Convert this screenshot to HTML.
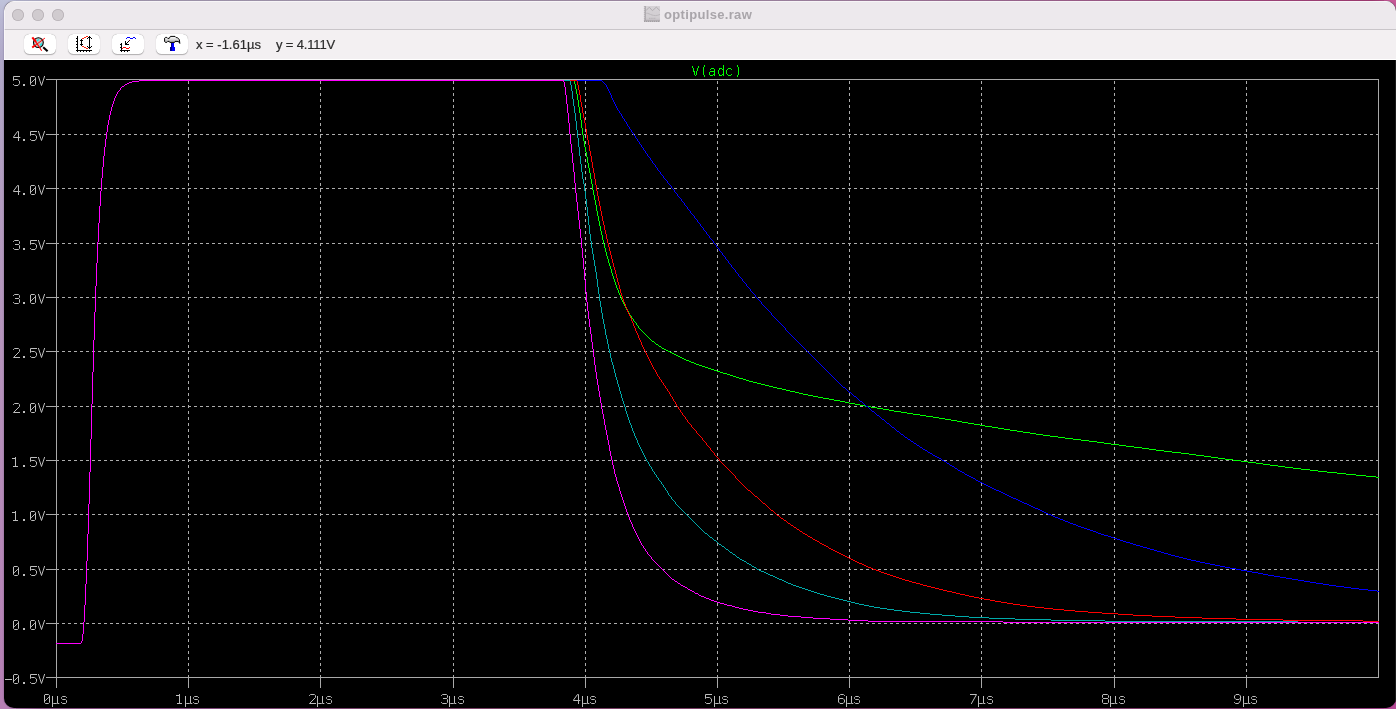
<!DOCTYPE html>
<html><head><meta charset="utf-8"><title>optipulse.raw</title>
<style>
html,body{margin:0;padding:0}
body{width:1396px;height:709px;overflow:hidden;position:relative;background:#b58fb8;font-family:"Liberation Sans",sans-serif}
#bgl{position:absolute;left:0;top:0;width:16px;height:709px;background:linear-gradient(to bottom,#c0c3db 0,#b8b6d2 20px,#b0a8c8 60px,#b39cc0 200px,#b594bc 345px,#b588b8 540px,#b67fb4 709px)}
#bgt{position:absolute;left:0;top:0;width:1396px;height:14px;background:linear-gradient(to right,#bfc3db 0,#a9a0b6 120px,#a89cb0 420px,#a68aa6 800px,#a46e96 1000px,#a84a80 1250px,#a83c74 1372px,#c85a98 1396px)}
#bgb{position:absolute;left:0;top:694px;width:1396px;height:15px;background:linear-gradient(to right,#b880b6 0,#a873a6 12px,#8c5286 40px,#8a4f84 200px,#82466a 450px,#84406c 1000px,#8a3870 1300px,#a8448c 1380px,#b84c98 1396px)}
#bgr{position:absolute;left:1384px;top:0;width:12px;height:709px;background:linear-gradient(to bottom,#c85a98 0,#b84c90 20px,#b04888 400px,#b64a96 709px)}
#win{position:absolute;left:4px;top:1px;width:1392px;height:706.6px;border-radius:10px;overflow:hidden;background:#000;box-shadow:0 0 1.5px rgba(40,20,60,.55)}
#tb{position:absolute;left:0;top:0;width:100%;height:28px;background:#ede9ed;border-top:1px solid #f7f5f7;box-sizing:border-box}
#sep{position:absolute;left:0;top:28px;width:100%;height:1px;background:#c9c5c9}
#tools{position:absolute;left:0;top:29px;width:100%;height:30px;background:#f3f0f2;border-bottom:1px solid #fff;box-sizing:border-box}
#edge{position:absolute;right:0;top:59px;width:1px;height:660px;background:#1a1a1a}
#edgl{position:absolute;left:0;top:0;width:1px;height:59px;background:rgba(255,255,255,.55)}
.tl{position:absolute;top:8px;width:12px;height:12px;border-radius:50%;background:#d0cbcf;box-shadow:inset 0 0 0 .8px #b7b1b6;box-sizing:border-box}
#ttl{will-change:transform;position:absolute;left:660.2px;top:6.1px;font-weight:bold;font-size:13px;line-height:16px;color:#a9a5aa;white-space:nowrap;letter-spacing:.33px}
.btn{position:absolute;top:33px;width:32px;height:19.7px;border-radius:5.5px;background:#fff;box-shadow:0 .5px 1px rgba(0,0,0,.28),0 0 .5px rgba(0,0,0,.25)}
.rd{will-change:transform;position:absolute;top:36px;font-size:13px;line-height:16px;color:#2b2b2b;-webkit-text-stroke:.2px #2b2b2b;white-space:nowrap}
#plot{position:absolute;left:0;top:0}
#ico{position:absolute;left:0;top:0}
</style></head>
<body>
<div id="bgt"></div><div id="bgb"></div><div id="bgl"></div><div id="bgr"></div>
<div id="win">
<div id="tb"></div><div id="sep"></div><div id="tools"></div><div id="edge"></div><div id="edgl"></div>
<div class="tl" style="left:8px"></div><div class="tl" style="left:28px"></div><div class="tl" style="left:48px"></div>
<div id="ttl">optipulse.raw</div>
<div class="btn" style="left:20px"></div><div class="btn" style="left:64px"></div><div class="btn" style="left:108px"></div><div class="btn" style="left:152px"></div>
<div class="rd" id="rx" style="left:192.4px">x = -1.61µs</div>
<div class="rd" id="ry" style="left:272.2px;letter-spacing:-.15px">y = 4.111V</div>
</div>
<svg id="ico" width="1396" height="64" viewBox="0 0 1396 64"><g><defs><linearGradient id="tig" x1="0" y1="0" x2="0" y2="1"><stop offset="0" stop-color="#d6d2d6"/><stop offset=".7" stop-color="#d2ced2"/><stop offset="1" stop-color="#c2bec2"/></linearGradient></defs><rect x="644" y="6" width="16" height="16" fill="url(#tig)"/><path d="M645.4 6V21" fill="none" stroke="#aeaaae" stroke-width="1.1"/><path d="M644.4 6V21" fill="none" stroke="#b0acb0" stroke-width=".9" stroke-dasharray="1.2 .8"/><path d="M644 20.4H660" fill="none" stroke="#b0acb0" stroke-width=".9"/><path d="M644 21.3H660" fill="none" stroke="#a29ea2" stroke-width="1.2" stroke-dasharray="1.2 .8"/><path d="M646 10.6L649.3 7.2L652.4 10.7L656.3 7.2L659.9 10.6" fill="none" stroke="#b2aeb2" stroke-width="1"/><path d="M646.3 13.3C648 13 650 14.4 652 15C654 15.7 657 16 660 14.4" fill="none" stroke="#bdb9bd" stroke-width="1"/><path d="M649 18.3H656" fill="none" stroke="#b6b2b6" stroke-width="1" stroke-dasharray="1.5 .7"/></g><g><circle cx="38.4" cy="42.6" r="4.9" fill="#c3c3c3" stroke="#000" stroke-width="1.1"/><path d="M36.4 40.4L38.6 39L39.2 40L37 41.5Z M39.6 45L41.6 43L42.3 44.2L40.3 46.1Z" fill="#00f0f0"/><path d="M43.2 47.3L47.6 51.2" stroke="#000" stroke-width="2.1" stroke-linecap="butt"/><path d="M35 40.6L41.7 50.7" stroke="#ff0000" stroke-width="1.05" fill="none"/><path d="M32.3 37.3L36 41.8" stroke="#ff0000" stroke-width="2.1" fill="none"/><path d="M34.4 46L44.9 38.1" stroke="#ff0000" stroke-width="1.0" fill="none"/><path d="M32.2 47.6L35.6 45.1" stroke="#ff0000" stroke-width="1.9" fill="none"/></g><g><path fill="#000" d="M77 36h1v15h-1zM76 50h16v1h-16zM76 38h1v1h-1zM76 41h1v1h-1zM76 44h1v1h-1zM76 47h1v1h-1zM77 51h1v1h-1zM80 51h1v1h-1zM83 51h1v1h-1zM86 51h1v1h-1zM89 51h1v1h-1zM81 39h1v7h-1zM80 40h3v1h-3zM80 44h3v1h-3zM89 36h1v13h-1zM88 37h3v1h-3zM87 38h1v1h-1zM91 38h1v1h-1zM88 47h3v1h-3zM87 46h1v1h-1zM91 46h1v1h-1z"/><path fill="#ff2a10" d="M82 38h2v1h-2zM84 37h2v1h-2zM86 36h2v1h-2zM82 46h2v1h-2zM84 47h2v1h-2zM86 48h2v1h-2z"/></g><g><path fill="#000" d="M121 43h1v8h-1zM120 50h10v1h-10zM120 44h1v1h-1zM120 47h1v1h-1zM121 51h1v1h-1zM124 51h1v1h-1zM127 51h1v1h-1zM125 41h1v4h-1zM125 44h4v1h-4zM126 43h1v1h-1zM127 42h1v1h-1zM128 41h1v1h-1z"/><path fill="#700010" d="M129 40h1v1h-1z"/><path fill="#0000ff" d="M126 38h1v1h-1zM127 37h3v1h-3zM130 38h3v1h-3zM133 37h2v1h-2zM135 38h1v1h-1z"/><path fill="#ff0000" d="M122 48h1v1h-1zM123 47h3v1h-3zM126 48h3v1h-3zM129 47h1v1h-1z"/></g><g><defs><linearGradient id="hg" x1="0" y1="0" x2="0" y2="1"><stop offset="0" stop-color="#ffffff"/><stop offset=".45" stop-color="#d8d8d8"/><stop offset=".8" stop-color="#a8a8a8"/><stop offset="1" stop-color="#808080"/></linearGradient><linearGradient id="hb" x1="0" y1="0" x2="1" y2="0"><stop offset="0" stop-color="#000080"/><stop offset=".38" stop-color="#000090"/><stop offset=".5" stop-color="#0000ff"/><stop offset="1" stop-color="#0000ff"/></linearGradient></defs><path d="M164.6 38.2L165.6 37.4H166.8L167.8 38.4H169.2L170.4 36.4H175L176.2 37.6H177.4L179.4 39.8L179.8 43.4L178.6 41.6L177 41.4H175L174.6 42.4H169.8L169.2 41.4H167.8L166.8 42.4H165.6L164.6 41.6Z" fill="url(#hg)" stroke="#000" stroke-width="1" stroke-linejoin="round"/><rect x="171" y="43" width="3" height="4.2" fill="url(#hb)"/><rect x="170" y="47" width="5" height="4" fill="url(#hb)"/></g></svg>
<svg id="plot" width="1396" height="709" viewBox="0 0 1396 709"><g stroke="#adadad" stroke-width="1" stroke-dasharray="3 3" shape-rendering="crispEdges"><line x1="56" y1="134.5" x2="1378" y2="134.5"/><line x1="56" y1="188.5" x2="1378" y2="188.5"/><line x1="56" y1="243.5" x2="1378" y2="243.5"/><line x1="56" y1="297.5" x2="1378" y2="297.5"/><line x1="56" y1="351.5" x2="1378" y2="351.5"/><line x1="56" y1="406.5" x2="1378" y2="406.5"/><line x1="56" y1="460.5" x2="1378" y2="460.5"/><line x1="56" y1="514.5" x2="1378" y2="514.5"/><line x1="56" y1="569.5" x2="1378" y2="569.5"/><line x1="56" y1="623.5" x2="1378" y2="623.5"/></g><g stroke="#adadad" stroke-width="1" stroke-dasharray="3 3" shape-rendering="crispEdges"><line x1="188.5" y1="678" x2="188.5" y2="80"/><line x1="320.5" y1="678" x2="320.5" y2="80"/><line x1="453.5" y1="678" x2="453.5" y2="80"/><line x1="585.5" y1="678" x2="585.5" y2="80"/><line x1="717.5" y1="678" x2="717.5" y2="80"/><line x1="849.5" y1="678" x2="849.5" y2="80"/><line x1="981.5" y1="678" x2="981.5" y2="80"/><line x1="1114.5" y1="678" x2="1114.5" y2="80"/><line x1="1246.5" y1="678" x2="1246.5" y2="80"/></g><path fill="#a9a9a9" shape-rendering="crispEdges" d="M56 79h1323v1h-1323zM56 677h1323v1h-1323zM56 79h1v599h-1zM1378 79h1v599h-1zM46 79h10v1h-10zM46 134h10v1h-10zM46 188h10v1h-10zM46 243h10v1h-10zM46 297h10v1h-10zM46 351h10v1h-10zM46 406h10v1h-10zM46 460h10v1h-10zM46 514h10v1h-10zM46 569h10v1h-10zM46 623h10v1h-10zM46 677h10v1h-10zM56 678h1v10h-1zM188 678h1v10h-1zM320 678h1v10h-1zM453 678h1v10h-1zM585 678h1v10h-1zM717 678h1v10h-1zM849 678h1v10h-1zM981 678h1v10h-1zM1114 678h1v10h-1zM1246 678h1v10h-1z"/><path fill="#00ff00" shape-rendering="crispEdges" d="M56 643h25v1h-25zM81 641h1v2h-1zM82 634h1v7h-1zM83 622h1v12h-1zM84 605h1v17h-1zM85 584h1v21h-1zM86 561h1v23h-1zM87 534h1v27h-1zM88 504h1v30h-1zM89 472h1v32h-1zM90 439h1v33h-1zM91 404h1v35h-1zM92 372h1v32h-1zM93 340h1v32h-1zM94 312h1v28h-1zM95 286h1v26h-1zM96 263h1v23h-1zM97 242h1v21h-1zM98 223h1v19h-1zM99 206h1v17h-1zM100 191h1v15h-1zM101 178h1v13h-1zM102 167h1v11h-1zM103 156h1v11h-1zM104 147h1v9h-1zM105 139h1v8h-1zM106 132h1v7h-1zM107 125h1v7h-1zM108 120h1v5h-1zM109 115h1v5h-1zM110 111h1v4h-1zM111 107h1v4h-1zM112 104h1v3h-1zM113 101h1v3h-1zM114 98h1v3h-1zM115 96h1v2h-1zM116 94h1v2h-1zM117 92h1v2h-1zM118 91h1v1h-1zM119 90h1v1h-1zM120 88h1v2h-1zM121 87h1v1h-1zM122 86h2v1h-2zM124 85h1v1h-1zM125 84h2v1h-2zM127 83h2v1h-2zM129 82h3v1h-3zM132 81h7v1h-7zM139 80h435v1h-435zM574 81h1v3h-1zM575 84h1v5h-1zM576 89h1v5h-1zM577 94h1v6h-1zM578 100h1v7h-1zM579 107h1v6h-1zM580 113h1v7h-1zM581 120h1v8h-1zM582 128h1v7h-1zM583 135h1v6h-1zM584 141h1v6h-1zM585 147h1v5h-1zM586 152h1v5h-1zM587 157h1v6h-1zM588 163h1v5h-1zM589 168h1v5h-1zM590 173h1v6h-1zM591 179h1v5h-1zM592 184h1v6h-1zM593 190h1v5h-1zM594 195h1v5h-1zM595 200h1v5h-1zM596 205h1v6h-1zM597 211h1v5h-1zM598 216h1v5h-1zM599 221h1v5h-1zM600 226h1v5h-1zM601 231h1v4h-1zM602 235h1v5h-1zM603 240h1v4h-1zM604 244h1v4h-1zM605 248h1v4h-1zM606 252h1v4h-1zM607 256h1v3h-1zM608 259h1v4h-1zM609 263h1v3h-1zM610 266h1v3h-1zM611 269h1v4h-1zM612 273h1v3h-1zM613 276h1v3h-1zM614 279h1v3h-1zM615 282h1v3h-1zM616 285h1v3h-1zM617 288h1v2h-1zM618 290h1v3h-1zM619 293h1v2h-1zM620 295h1v2h-1zM621 297h1v3h-1zM622 300h1v2h-1zM623 302h1v2h-1zM624 304h1v2h-1zM625 306h1v2h-1zM626 308h1v2h-1zM627 310h1v1h-1zM628 311h1v2h-1zM629 313h1v2h-1zM630 315h1v1h-1zM631 316h1v2h-1zM632 318h1v1h-1zM633 319h1v2h-1zM634 321h1v1h-1zM635 322h1v1h-1zM636 323h1v2h-1zM637 325h1v1h-1zM638 326h1v2h-1zM639 328h1v1h-1zM640 329h1v1h-1zM641 330h1v1h-1zM642 331h1v1h-1zM643 332h1v1h-1zM644 333h1v1h-1zM645 334h1v1h-1zM646 335h1v1h-1zM647 336h1v1h-1zM648 337h1v1h-1zM649 338h1v1h-1zM650 339h1v1h-1zM651 340h1v1h-1zM652 341h2v1h-2zM654 342h1v1h-1zM655 343h1v1h-1zM656 344h2v1h-2zM658 345h1v1h-1zM659 346h2v1h-2zM661 347h1v1h-1zM662 348h2v1h-2zM664 349h2v1h-2zM666 350h2v1h-2zM668 351h2v1h-2zM670 352h2v1h-2zM672 353h2v1h-2zM674 354h2v1h-2zM676 355h2v1h-2zM678 356h2v1h-2zM680 357h2v1h-2zM682 358h2v1h-2zM684 359h2v1h-2zM686 360h3v1h-3zM689 361h2v1h-2zM691 362h3v1h-3zM694 363h2v1h-2zM696 364h3v1h-3zM699 365h3v1h-3zM702 366h3v1h-3zM705 367h3v1h-3zM708 368h3v1h-3zM711 369h3v1h-3zM714 370h3v1h-3zM717 371h3v1h-3zM720 372h3v1h-3zM723 373h4v1h-4zM727 374h3v1h-3zM730 375h3v1h-3zM733 376h3v1h-3zM736 377h3v1h-3zM739 378h4v1h-4zM743 379h3v1h-3zM746 380h3v1h-3zM749 381h4v1h-4zM753 382h4v1h-4zM757 383h4v1h-4zM761 384h4v1h-4zM765 385h4v1h-4zM769 386h4v1h-4zM773 387h4v1h-4zM777 388h5v1h-5zM782 389h4v1h-4zM786 390h4v1h-4zM790 391h5v1h-5zM795 392h4v1h-4zM799 393h4v1h-4zM803 394h5v1h-5zM808 395h5v1h-5zM813 396h5v1h-5zM818 397h5v1h-5zM823 398h6v1h-6zM829 399h5v1h-5zM834 400h6v1h-6zM840 401h5v1h-5zM845 402h4v1h-4zM849 403h6v1h-6zM855 404h5v1h-5zM860 405h5v1h-5zM865 406h6v1h-6zM871 407h6v1h-6zM877 408h6v1h-6zM883 409h6v1h-6zM889 410h5v1h-5zM894 411h7v1h-7zM901 412h6v1h-6zM907 413h6v1h-6zM913 414h7v1h-7zM920 415h6v1h-6zM926 416h7v1h-7zM933 417h6v1h-6zM939 418h6v1h-6zM945 419h6v1h-6zM951 420h6v1h-6zM957 421h5v1h-5zM962 422h6v1h-6zM968 423h6v1h-6zM974 424h6v1h-6zM980 425h5v1h-5zM985 426h7v1h-7zM992 427h6v1h-6zM998 428h6v1h-6zM1004 429h6v1h-6zM1010 430h7v1h-7zM1017 431h6v1h-6zM1023 432h7v1h-7zM1030 433h6v1h-6zM1036 434h7v1h-7zM1043 435h7v1h-7zM1050 436h8v1h-8zM1058 437h7v1h-7zM1065 438h8v1h-8zM1073 439h8v1h-8zM1081 440h8v1h-8zM1089 441h8v1h-8zM1097 442h7v1h-7zM1104 443h7v1h-7zM1111 444h8v1h-8zM1119 445h7v1h-7zM1126 446h8v1h-8zM1134 447h8v1h-8zM1142 448h7v1h-7zM1149 449h7v1h-7zM1156 450h8v1h-8zM1164 451h8v1h-8zM1172 452h9v1h-9zM1181 453h8v1h-8zM1189 454h7v1h-7zM1196 455h8v1h-8zM1204 456h7v1h-7zM1211 457h7v1h-7zM1218 458h7v1h-7zM1225 459h8v1h-8zM1233 460h8v1h-8zM1241 461h7v1h-7zM1248 462h8v1h-8zM1256 463h7v1h-7zM1263 464h7v1h-7zM1270 465h8v1h-8zM1278 466h7v1h-7zM1285 467h8v1h-8zM1293 468h8v1h-8zM1301 469h9v1h-9zM1310 470h8v1h-8zM1318 471h9v1h-9zM1327 472h10v1h-10zM1337 473h9v1h-9zM1346 474h10v1h-10zM1356 475h10v1h-10zM1366 476h10v1h-10zM1376 477h3v1h-3z"/><path fill="#0000ff" shape-rendering="crispEdges" d="M56 643h25v1h-25zM81 641h1v2h-1zM82 634h1v7h-1zM83 622h1v12h-1zM84 605h1v17h-1zM85 584h1v21h-1zM86 561h1v23h-1zM87 534h1v27h-1zM88 504h1v30h-1zM89 472h1v32h-1zM90 439h1v33h-1zM91 404h1v35h-1zM92 372h1v32h-1zM93 340h1v32h-1zM94 312h1v28h-1zM95 286h1v26h-1zM96 263h1v23h-1zM97 242h1v21h-1zM98 223h1v19h-1zM99 206h1v17h-1zM100 191h1v15h-1zM101 178h1v13h-1zM102 167h1v11h-1zM103 156h1v11h-1zM104 147h1v9h-1zM105 139h1v8h-1zM106 132h1v7h-1zM107 125h1v7h-1zM108 120h1v5h-1zM109 115h1v5h-1zM110 111h1v4h-1zM111 107h1v4h-1zM112 104h1v3h-1zM113 101h1v3h-1zM114 98h1v3h-1zM115 96h1v2h-1zM116 94h1v2h-1zM117 92h1v2h-1zM118 91h1v1h-1zM119 90h1v1h-1zM120 88h1v2h-1zM121 87h1v1h-1zM122 86h2v1h-2zM124 85h1v1h-1zM125 84h2v1h-2zM127 83h2v1h-2zM129 82h3v1h-3zM132 81h7v1h-7zM139 80h463v1h-463zM602 81h1v1h-1zM603 82h1v1h-1zM604 83h1v1h-1zM605 84h1v1h-1zM606 85h1v2h-1zM607 87h1v2h-1zM608 89h1v2h-1zM609 91h1v2h-1zM610 93h1v2h-1zM611 95h1v3h-1zM612 98h1v2h-1zM613 100h1v2h-1zM614 102h1v2h-1zM615 104h1v2h-1zM616 106h1v2h-1zM617 108h1v2h-1zM618 110h1v1h-1zM619 111h1v2h-1zM620 113h1v1h-1zM621 114h1v2h-1zM622 116h1v2h-1zM623 118h1v1h-1zM624 119h1v2h-1zM625 121h1v1h-1zM626 122h1v2h-1zM627 124h1v2h-1zM628 126h1v1h-1zM629 127h1v2h-1zM630 129h1v1h-1zM631 130h1v2h-1zM632 132h1v1h-1zM633 133h1v2h-1zM634 135h1v1h-1zM635 136h1v2h-1zM636 138h1v1h-1zM637 139h1v2h-1zM638 141h1v1h-1zM639 142h1v2h-1zM640 144h1v1h-1zM641 145h1v2h-1zM642 147h1v1h-1zM643 148h1v2h-1zM644 150h1v1h-1zM645 151h1v2h-1zM646 153h1v1h-1zM647 154h1v2h-1zM648 156h1v1h-1zM649 157h1v1h-1zM650 158h1v2h-1zM651 160h1v1h-1zM652 161h1v2h-1zM653 163h1v1h-1zM654 164h1v1h-1zM655 165h1v2h-1zM656 167h1v1h-1zM657 168h1v2h-1zM658 170h1v1h-1zM659 171h1v1h-1zM660 172h1v2h-1zM661 174h1v1h-1zM662 175h1v1h-1zM663 176h1v2h-1zM664 178h1v1h-1zM665 179h1v1h-1zM666 180h1v1h-1zM667 181h1v2h-1zM668 183h1v1h-1zM669 184h1v1h-1zM670 185h1v1h-1zM671 186h1v2h-1zM672 188h1v1h-1zM673 189h1v1h-1zM674 190h1v2h-1zM675 192h1v1h-1zM676 193h1v1h-1zM677 194h1v2h-1zM678 196h1v1h-1zM679 197h1v1h-1zM680 198h1v1h-1zM681 199h1v2h-1zM682 201h1v1h-1zM683 202h1v1h-1zM684 203h1v2h-1zM685 205h1v1h-1zM686 206h1v1h-1zM687 207h1v2h-1zM688 209h1v1h-1zM689 210h1v1h-1zM690 211h1v2h-1zM691 213h1v1h-1zM692 214h1v1h-1zM693 215h1v1h-1zM694 216h1v2h-1zM695 218h1v1h-1zM696 219h1v1h-1zM697 220h1v2h-1zM698 222h1v1h-1zM699 223h1v1h-1zM700 224h1v2h-1zM701 226h1v1h-1zM702 227h1v1h-1zM703 228h1v2h-1zM704 230h1v1h-1zM705 231h1v1h-1zM706 232h1v2h-1zM707 234h1v1h-1zM708 235h1v1h-1zM709 236h1v2h-1zM710 238h1v1h-1zM711 239h1v1h-1zM712 240h1v1h-1zM713 241h1v2h-1zM714 243h1v1h-1zM715 244h1v1h-1zM716 245h1v2h-1zM717 247h1v1h-1zM718 248h1v1h-1zM719 249h1v2h-1zM720 251h1v1h-1zM721 252h1v1h-1zM722 253h1v2h-1zM723 255h1v1h-1zM724 256h1v1h-1zM725 257h1v2h-1zM726 259h1v1h-1zM727 260h1v1h-1zM728 261h1v2h-1zM729 263h1v1h-1zM730 264h1v1h-1zM731 265h1v2h-1zM732 267h1v1h-1zM733 268h1v1h-1zM734 269h1v1h-1zM735 270h1v2h-1zM736 272h1v1h-1zM737 273h1v1h-1zM738 274h1v2h-1zM739 276h1v1h-1zM740 277h1v1h-1zM741 278h1v1h-1zM742 279h1v2h-1zM743 281h1v1h-1zM744 282h1v1h-1zM745 283h1v1h-1zM746 284h1v2h-1zM747 286h1v1h-1zM748 287h1v1h-1zM749 288h1v1h-1zM750 289h1v2h-1zM751 291h1v1h-1zM752 292h1v1h-1zM753 293h1v1h-1zM754 294h1v1h-1zM755 295h1v2h-1zM756 297h1v1h-1zM757 298h1v1h-1zM758 299h1v1h-1zM759 300h1v1h-1zM760 301h1v1h-1zM761 302h1v2h-1zM762 304h1v1h-1zM763 305h1v1h-1zM764 306h1v1h-1zM765 307h1v1h-1zM766 308h1v1h-1zM767 309h1v1h-1zM768 310h1v1h-1zM769 311h1v1h-1zM770 312h1v1h-1zM771 313h1v2h-1zM772 315h1v1h-1zM773 316h1v1h-1zM774 317h1v1h-1zM775 318h1v1h-1zM776 319h1v1h-1zM777 320h1v1h-1zM778 321h1v1h-1zM779 322h1v1h-1zM780 323h1v1h-1zM781 324h1v1h-1zM782 325h1v1h-1zM783 326h1v1h-1zM784 327h1v1h-1zM785 328h1v2h-1zM786 330h1v1h-1zM787 331h1v1h-1zM788 332h1v1h-1zM789 333h1v1h-1zM790 334h1v1h-1zM791 335h1v1h-1zM792 336h1v1h-1zM793 337h1v1h-1zM794 338h1v1h-1zM795 339h1v1h-1zM796 340h1v1h-1zM797 341h1v1h-1zM798 342h1v1h-1zM799 343h1v1h-1zM800 344h1v1h-1zM801 345h1v1h-1zM802 346h1v1h-1zM803 347h1v1h-1zM804 348h1v1h-1zM805 349h1v1h-1zM806 350h1v1h-1zM807 351h1v1h-1zM808 352h1v1h-1zM809 353h1v1h-1zM810 354h1v1h-1zM811 355h1v1h-1zM812 356h1v1h-1zM813 357h1v1h-1zM814 358h1v1h-1zM815 359h1v1h-1zM816 360h1v1h-1zM817 361h1v1h-1zM818 362h1v1h-1zM819 363h1v1h-1zM820 364h1v1h-1zM821 365h1v1h-1zM822 366h1v1h-1zM823 367h1v1h-1zM824 368h1v1h-1zM825 369h1v1h-1zM826 370h1v1h-1zM827 371h1v1h-1zM828 372h1v1h-1zM829 373h1v1h-1zM830 374h1v1h-1zM831 375h1v1h-1zM832 376h1v1h-1zM833 377h1v1h-1zM834 378h1v1h-1zM835 379h1v1h-1zM836 380h1v1h-1zM837 381h1v1h-1zM838 382h1v1h-1zM839 383h1v1h-1zM840 384h1v1h-1zM841 385h1v1h-1zM842 386h1v1h-1zM843 387h2v1h-2zM845 388h1v1h-1zM846 389h1v1h-1zM847 390h1v1h-1zM848 391h1v1h-1zM849 392h2v1h-2zM851 393h1v1h-1zM852 394h1v1h-1zM853 395h1v1h-1zM854 396h2v1h-2zM856 397h1v1h-1zM857 398h1v1h-1zM858 399h1v1h-1zM859 400h1v1h-1zM860 401h2v1h-2zM862 402h1v1h-1zM863 403h1v1h-1zM864 404h1v1h-1zM865 405h1v1h-1zM866 406h2v1h-2zM868 407h1v1h-1zM869 408h1v1h-1zM870 409h1v1h-1zM871 410h1v1h-1zM872 411h2v1h-2zM874 412h1v1h-1zM875 413h1v1h-1zM876 414h1v1h-1zM877 415h2v1h-2zM879 416h1v1h-1zM880 417h1v1h-1zM881 418h1v1h-1zM882 419h2v1h-2zM884 420h1v1h-1zM885 421h1v1h-1zM886 422h1v1h-1zM887 423h2v1h-2zM889 424h1v1h-1zM890 425h1v1h-1zM891 426h1v1h-1zM892 427h2v1h-2zM894 428h1v1h-1zM895 429h1v1h-1zM896 430h1v1h-1zM897 431h2v1h-2zM899 432h1v1h-1zM900 433h1v1h-1zM901 434h2v1h-2zM903 435h1v1h-1zM904 436h1v1h-1zM905 437h2v1h-2zM907 438h1v1h-1zM908 439h2v1h-2zM910 440h1v1h-1zM911 441h2v1h-2zM913 442h1v1h-1zM914 443h2v1h-2zM916 444h1v1h-1zM917 445h2v1h-2zM919 446h1v1h-1zM920 447h2v1h-2zM922 448h1v1h-1zM923 449h2v1h-2zM925 450h2v1h-2zM927 451h1v1h-1zM928 452h2v1h-2zM930 453h2v1h-2zM932 454h1v1h-1zM933 455h2v1h-2zM935 456h2v1h-2zM937 457h2v1h-2zM939 458h2v1h-2zM941 459h1v1h-1zM942 460h2v1h-2zM944 461h2v1h-2zM946 462h1v1h-1zM947 463h2v1h-2zM949 464h1v1h-1zM950 465h2v1h-2zM952 466h2v1h-2zM954 467h1v1h-1zM955 468h2v1h-2zM957 469h1v1h-1zM958 470h2v1h-2zM960 471h2v1h-2zM962 472h2v1h-2zM964 473h1v1h-1zM965 474h2v1h-2zM967 475h2v1h-2zM969 476h2v1h-2zM971 477h2v1h-2zM973 478h2v1h-2zM975 479h1v1h-1zM976 480h2v1h-2zM978 481h2v1h-2zM980 482h2v1h-2zM982 483h2v1h-2zM984 484h2v1h-2zM986 485h2v1h-2zM988 486h2v1h-2zM990 487h2v1h-2zM992 488h2v1h-2zM994 489h2v1h-2zM996 490h3v1h-3zM999 491h2v1h-2zM1001 492h2v1h-2zM1003 493h2v1h-2zM1005 494h2v1h-2zM1007 495h2v1h-2zM1009 496h2v1h-2zM1011 497h2v1h-2zM1013 498h3v1h-3zM1016 499h2v1h-2zM1018 500h2v1h-2zM1020 501h2v1h-2zM1022 502h2v1h-2zM1024 503h3v1h-3zM1027 504h2v1h-2zM1029 505h2v1h-2zM1031 506h2v1h-2zM1033 507h2v1h-2zM1035 508h3v1h-3zM1038 509h2v1h-2zM1040 510h2v1h-2zM1042 511h2v1h-2zM1044 512h2v1h-2zM1046 513h2v1h-2zM1048 514h3v1h-3zM1051 515h2v1h-2zM1053 516h2v1h-2zM1055 517h3v1h-3zM1058 518h2v1h-2zM1060 519h3v1h-3zM1063 520h2v1h-2zM1065 521h3v1h-3zM1068 522h2v1h-2zM1070 523h3v1h-3zM1073 524h3v1h-3zM1076 525h2v1h-2zM1078 526h3v1h-3zM1081 527h3v1h-3zM1084 528h3v1h-3zM1087 529h3v1h-3zM1090 530h3v1h-3zM1093 531h3v1h-3zM1096 532h2v1h-2zM1098 533h3v1h-3zM1101 534h3v1h-3zM1104 535h4v1h-4zM1108 536h3v1h-3zM1111 537h3v1h-3zM1114 538h3v1h-3zM1117 539h3v1h-3zM1120 540h3v1h-3zM1123 541h3v1h-3zM1126 542h4v1h-4zM1130 543h3v1h-3zM1133 544h3v1h-3zM1136 545h4v1h-4zM1140 546h3v1h-3zM1143 547h4v1h-4zM1147 548h3v1h-3zM1150 549h4v1h-4zM1154 550h3v1h-3zM1157 551h4v1h-4zM1161 552h3v1h-3zM1164 553h4v1h-4zM1168 554h3v1h-3zM1171 555h4v1h-4zM1175 556h4v1h-4zM1179 557h4v1h-4zM1183 558h4v1h-4zM1187 559h4v1h-4zM1191 560h5v1h-5zM1196 561h4v1h-4zM1200 562h5v1h-5zM1205 563h5v1h-5zM1210 564h5v1h-5zM1215 565h5v1h-5zM1220 566h5v1h-5zM1225 567h5v1h-5zM1230 568h6v1h-6zM1236 569h5v1h-5zM1241 570h6v1h-6zM1247 571h5v1h-5zM1252 572h6v1h-6zM1258 573h5v1h-5zM1263 574h5v1h-5zM1268 575h6v1h-6zM1274 576h6v1h-6zM1280 577h6v1h-6zM1286 578h6v1h-6zM1292 579h6v1h-6zM1298 580h6v1h-6zM1304 581h6v1h-6zM1310 582h6v1h-6zM1316 583h7v1h-7zM1323 584h6v1h-6zM1329 585h7v1h-7zM1336 586h8v1h-8zM1344 587h7v1h-7zM1351 588h8v1h-8zM1359 589h9v1h-9zM1368 590h9v1h-9zM1377 591h2v1h-2z"/><path fill="#ff0000" shape-rendering="crispEdges" d="M56 643h25v1h-25zM81 641h1v2h-1zM82 634h1v7h-1zM83 622h1v12h-1zM84 605h1v17h-1zM85 584h1v21h-1zM86 561h1v23h-1zM87 534h1v27h-1zM88 504h1v30h-1zM89 472h1v32h-1zM90 439h1v33h-1zM91 404h1v35h-1zM92 372h1v32h-1zM93 340h1v32h-1zM94 312h1v28h-1zM95 286h1v26h-1zM96 263h1v23h-1zM97 242h1v21h-1zM98 223h1v19h-1zM99 206h1v17h-1zM100 191h1v15h-1zM101 178h1v13h-1zM102 167h1v11h-1zM103 156h1v11h-1zM104 147h1v9h-1zM105 139h1v8h-1zM106 132h1v7h-1zM107 125h1v7h-1zM108 120h1v5h-1zM109 115h1v5h-1zM110 111h1v4h-1zM111 107h1v4h-1zM112 104h1v3h-1zM113 101h1v3h-1zM114 98h1v3h-1zM115 96h1v2h-1zM116 94h1v2h-1zM117 92h1v2h-1zM118 91h1v1h-1zM119 90h1v1h-1zM120 88h1v2h-1zM121 87h1v1h-1zM122 86h2v1h-2zM124 85h1v1h-1zM125 84h2v1h-2zM127 83h2v1h-2zM129 82h3v1h-3zM132 81h7v1h-7zM139 80h438v1h-438zM577 81h1v4h-1zM578 85h1v5h-1zM579 90h1v5h-1zM580 95h1v7h-1zM581 102h1v5h-1zM582 107h1v6h-1zM583 113h1v5h-1zM584 118h1v5h-1zM585 123h1v6h-1zM586 129h1v6h-1zM587 135h1v5h-1zM588 140h1v5h-1zM589 145h1v6h-1zM590 151h1v5h-1zM591 156h1v6h-1zM592 162h1v6h-1zM593 168h1v5h-1zM594 173h1v6h-1zM595 179h1v6h-1zM596 185h1v6h-1zM597 191h1v5h-1zM598 196h1v5h-1zM599 201h1v5h-1zM600 206h1v5h-1zM601 211h1v5h-1zM602 216h1v5h-1zM603 221h1v4h-1zM604 225h1v5h-1zM605 230h1v4h-1zM606 234h1v5h-1zM607 239h1v4h-1zM608 243h1v4h-1zM609 247h1v4h-1zM610 251h1v4h-1zM611 255h1v4h-1zM612 259h1v4h-1zM613 263h1v4h-1zM614 267h1v3h-1zM615 270h1v4h-1zM616 274h1v4h-1zM617 278h1v4h-1zM618 282h1v3h-1zM619 285h1v4h-1zM620 289h1v4h-1zM621 293h1v3h-1zM622 296h1v3h-1zM623 299h1v3h-1zM624 302h1v2h-1zM625 304h1v3h-1zM626 307h1v2h-1zM627 309h1v3h-1zM628 312h1v2h-1zM629 314h1v2h-1zM630 316h1v2h-1zM631 318h1v3h-1zM632 321h1v2h-1zM633 323h1v3h-1zM634 326h1v2h-1zM635 328h1v3h-1zM636 331h1v2h-1zM637 333h1v2h-1zM638 335h1v3h-1zM639 338h1v2h-1zM640 340h1v2h-1zM641 342h1v3h-1zM642 345h1v2h-1zM643 347h1v2h-1zM644 349h1v2h-1zM645 351h1v2h-1zM646 353h1v2h-1zM647 355h1v2h-1zM648 357h1v2h-1zM649 359h1v2h-1zM650 361h1v2h-1zM651 363h1v2h-1zM652 365h1v2h-1zM653 367h1v2h-1zM654 369h1v1h-1zM655 370h1v2h-1zM656 372h1v2h-1zM657 374h1v2h-1zM658 376h1v1h-1zM659 377h1v2h-1zM660 379h1v1h-1zM661 380h1v2h-1zM662 382h1v1h-1zM663 383h1v2h-1zM664 385h1v1h-1zM665 386h1v2h-1zM666 388h1v1h-1zM667 389h1v2h-1zM668 391h1v1h-1zM669 392h1v2h-1zM670 394h1v2h-1zM671 396h1v1h-1zM672 397h1v2h-1zM673 399h1v2h-1zM674 401h1v1h-1zM675 402h1v2h-1zM676 404h1v2h-1zM677 406h1v1h-1zM678 407h1v2h-1zM679 409h1v1h-1zM680 410h1v2h-1zM681 412h1v1h-1zM682 413h1v2h-1zM683 415h1v1h-1zM684 416h1v1h-1zM685 417h1v2h-1zM686 419h1v1h-1zM687 420h1v2h-1zM688 422h1v1h-1zM689 423h1v1h-1zM690 424h1v1h-1zM691 425h1v2h-1zM692 427h1v1h-1zM693 428h1v1h-1zM694 429h1v1h-1zM695 430h1v1h-1zM696 431h1v2h-1zM697 433h1v1h-1zM698 434h1v1h-1zM699 435h1v1h-1zM700 436h1v1h-1zM701 437h1v1h-1zM702 438h1v2h-1zM703 440h1v1h-1zM704 441h1v1h-1zM705 442h1v1h-1zM706 443h1v2h-1zM707 445h1v1h-1zM708 446h1v1h-1zM709 447h1v1h-1zM710 448h1v2h-1zM711 450h1v1h-1zM712 451h1v1h-1zM713 452h1v1h-1zM714 453h1v2h-1zM715 455h1v1h-1zM716 456h1v1h-1zM717 457h1v1h-1zM718 458h1v1h-1zM719 459h1v2h-1zM720 461h1v1h-1zM721 462h1v1h-1zM722 463h1v1h-1zM723 464h1v1h-1zM724 465h1v1h-1zM725 466h1v1h-1zM726 467h1v1h-1zM727 468h1v1h-1zM728 469h1v1h-1zM729 470h1v1h-1zM730 471h1v1h-1zM731 472h1v1h-1zM732 473h1v1h-1zM733 474h1v1h-1zM734 475h1v1h-1zM735 476h1v2h-1zM736 478h1v1h-1zM737 479h1v1h-1zM738 480h1v1h-1zM739 481h1v1h-1zM740 482h1v1h-1zM741 483h1v1h-1zM742 484h1v1h-1zM743 485h1v1h-1zM744 486h1v1h-1zM745 487h1v1h-1zM746 488h1v1h-1zM747 489h1v1h-1zM748 490h2v1h-2zM750 491h1v1h-1zM751 492h1v1h-1zM752 493h1v1h-1zM753 494h1v1h-1zM754 495h1v1h-1zM755 496h2v1h-2zM757 497h1v1h-1zM758 498h1v1h-1zM759 499h1v1h-1zM760 500h1v1h-1zM761 501h1v1h-1zM762 502h1v1h-1zM763 503h2v1h-2zM765 504h1v1h-1zM766 505h1v1h-1zM767 506h1v1h-1zM768 507h1v1h-1zM769 508h1v1h-1zM770 509h1v1h-1zM771 510h2v1h-2zM773 511h1v1h-1zM774 512h1v1h-1zM775 513h1v1h-1zM776 514h1v1h-1zM777 515h2v1h-2zM779 516h1v1h-1zM780 517h1v1h-1zM781 518h2v1h-2zM783 519h1v1h-1zM784 520h2v1h-2zM786 521h1v1h-1zM787 522h1v1h-1zM788 523h2v1h-2zM790 524h1v1h-1zM791 525h2v1h-2zM793 526h1v1h-1zM794 527h2v1h-2zM796 528h1v1h-1zM797 529h2v1h-2zM799 530h1v1h-1zM800 531h2v1h-2zM802 532h1v1h-1zM803 533h2v1h-2zM805 534h2v1h-2zM807 535h1v1h-1zM808 536h2v1h-2zM810 537h2v1h-2zM812 538h1v1h-1zM813 539h2v1h-2zM815 540h2v1h-2zM817 541h2v1h-2zM819 542h1v1h-1zM820 543h2v1h-2zM822 544h2v1h-2zM824 545h2v1h-2zM826 546h2v1h-2zM828 547h1v1h-1zM829 548h2v1h-2zM831 549h2v1h-2zM833 550h2v1h-2zM835 551h2v1h-2zM837 552h2v1h-2zM839 553h2v1h-2zM841 554h2v1h-2zM843 555h2v1h-2zM845 556h2v1h-2zM847 557h2v1h-2zM849 558h2v1h-2zM851 559h2v1h-2zM853 560h2v1h-2zM855 561h2v1h-2zM857 562h2v1h-2zM859 563h3v1h-3zM862 564h2v1h-2zM864 565h2v1h-2zM866 566h2v1h-2zM868 567h3v1h-3zM871 568h2v1h-2zM873 569h3v1h-3zM876 570h3v1h-3zM879 571h2v1h-2zM881 572h3v1h-3zM884 573h3v1h-3zM887 574h3v1h-3zM890 575h3v1h-3zM893 576h3v1h-3zM896 577h3v1h-3zM899 578h3v1h-3zM902 579h3v1h-3zM905 580h4v1h-4zM909 581h3v1h-3zM912 582h4v1h-4zM916 583h4v1h-4zM920 584h3v1h-3zM923 585h4v1h-4zM927 586h4v1h-4zM931 587h4v1h-4zM935 588h4v1h-4zM939 589h4v1h-4zM943 590h4v1h-4zM947 591h5v1h-5zM952 592h4v1h-4zM956 593h4v1h-4zM960 594h5v1h-5zM965 595h4v1h-4zM969 596h5v1h-5zM974 597h5v1h-5zM979 598h5v1h-5zM984 599h6v1h-6zM990 600h5v1h-5zM995 601h6v1h-6zM1001 602h6v1h-6zM1007 603h6v1h-6zM1013 604h7v1h-7zM1020 605h7v1h-7zM1027 606h8v1h-8zM1035 607h9v1h-9zM1044 608h9v1h-9zM1053 609h11v1h-11zM1064 610h11v1h-11zM1075 611h13v1h-13zM1088 612h14v1h-14zM1102 613h16v1h-16zM1118 614h15v1h-15zM1133 615h19v1h-19zM1152 616h23v1h-23zM1175 617h27v1h-27zM1202 618h34v1h-34zM1236 619h47v1h-47zM1283 620h80v1h-80zM1363 621h16v1h-16z"/><path fill="#00aaaa" shape-rendering="crispEdges" d="M56 643h25v1h-25zM81 641h1v2h-1zM82 634h1v7h-1zM83 622h1v12h-1zM84 605h1v17h-1zM85 584h1v21h-1zM86 561h1v23h-1zM87 534h1v27h-1zM88 504h1v30h-1zM89 472h1v32h-1zM90 439h1v33h-1zM91 404h1v35h-1zM92 372h1v32h-1zM93 340h1v32h-1zM94 312h1v28h-1zM95 286h1v26h-1zM96 263h1v23h-1zM97 242h1v21h-1zM98 223h1v19h-1zM99 206h1v17h-1zM100 191h1v15h-1zM101 178h1v13h-1zM102 167h1v11h-1zM103 156h1v11h-1zM104 147h1v9h-1zM105 139h1v8h-1zM106 132h1v7h-1zM107 125h1v7h-1zM108 120h1v5h-1zM109 115h1v5h-1zM110 111h1v4h-1zM111 107h1v4h-1zM112 104h1v3h-1zM113 101h1v3h-1zM114 98h1v3h-1zM115 96h1v2h-1zM116 94h1v2h-1zM117 92h1v2h-1zM118 91h1v1h-1zM119 90h1v1h-1zM120 88h1v2h-1zM121 87h1v1h-1zM122 86h2v1h-2zM124 85h1v1h-1zM125 84h2v1h-2zM127 83h2v1h-2zM129 82h3v1h-3zM132 81h7v1h-7zM139 80h431v1h-431zM570 81h1v4h-1zM571 85h1v6h-1zM572 91h1v8h-1zM573 99h1v7h-1zM574 106h1v7h-1zM575 113h1v8h-1zM576 121h1v9h-1zM577 130h1v8h-1zM578 138h1v9h-1zM579 147h1v9h-1zM580 156h1v8h-1zM581 164h1v8h-1zM582 172h1v7h-1zM583 179h1v5h-1zM584 184h1v7h-1zM585 191h1v8h-1zM586 199h1v8h-1zM587 207h1v9h-1zM588 216h1v9h-1zM589 225h1v9h-1zM590 234h1v7h-1zM591 241h1v7h-1zM592 248h1v6h-1zM593 254h1v6h-1zM594 260h1v6h-1zM595 266h1v6h-1zM596 272h1v7h-1zM597 279h1v8h-1zM598 287h1v7h-1zM599 294h1v7h-1zM600 301h1v6h-1zM601 307h1v6h-1zM602 313h1v6h-1zM603 319h1v5h-1zM604 324h1v5h-1zM605 329h1v6h-1zM606 335h1v4h-1zM607 339h1v5h-1zM608 344h1v5h-1zM609 349h1v4h-1zM610 353h1v5h-1zM611 358h1v4h-1zM612 362h1v3h-1zM613 365h1v4h-1zM614 369h1v4h-1zM615 373h1v4h-1zM616 377h1v3h-1zM617 380h1v4h-1zM618 384h1v3h-1zM619 387h1v4h-1zM620 391h1v3h-1zM621 394h1v4h-1zM622 398h1v3h-1zM623 401h1v3h-1zM624 404h1v3h-1zM625 407h1v4h-1zM626 411h1v3h-1zM627 414h1v3h-1zM628 417h1v3h-1zM629 420h1v3h-1zM630 423h1v2h-1zM631 425h1v3h-1zM632 428h1v3h-1zM633 431h1v2h-1zM634 433h1v3h-1zM635 436h1v2h-1zM636 438h1v2h-1zM637 440h1v3h-1zM638 443h1v2h-1zM639 445h1v2h-1zM640 447h1v2h-1zM641 449h1v2h-1zM642 451h1v2h-1zM643 453h1v2h-1zM644 455h1v2h-1zM645 457h1v2h-1zM646 459h1v2h-1zM647 461h1v1h-1zM648 462h1v2h-1zM649 464h1v2h-1zM650 466h1v1h-1zM651 467h1v2h-1zM652 469h1v2h-1zM653 471h1v1h-1zM654 472h1v2h-1zM655 474h1v1h-1zM656 475h1v2h-1zM657 477h1v1h-1zM658 478h1v2h-1zM659 480h1v1h-1zM660 481h1v1h-1zM661 482h1v2h-1zM662 484h1v1h-1zM663 485h1v2h-1zM664 487h1v1h-1zM665 488h1v2h-1zM666 490h1v1h-1zM667 491h1v2h-1zM668 493h1v2h-1zM669 495h1v1h-1zM670 496h1v1h-1zM671 497h1v2h-1zM672 499h1v1h-1zM673 500h1v1h-1zM674 501h1v1h-1zM675 502h1v2h-1zM676 504h1v1h-1zM677 505h1v1h-1zM678 506h1v1h-1zM679 507h1v1h-1zM680 508h1v1h-1zM681 509h1v1h-1zM682 510h1v1h-1zM683 511h1v1h-1zM684 512h1v1h-1zM685 513h1v1h-1zM686 514h1v1h-1zM687 515h1v1h-1zM688 516h1v1h-1zM689 517h1v1h-1zM690 518h1v1h-1zM691 519h1v1h-1zM692 520h1v1h-1zM693 521h1v1h-1zM694 522h1v1h-1zM695 523h1v1h-1zM696 524h1v1h-1zM697 525h1v1h-1zM698 526h1v1h-1zM699 527h1v1h-1zM700 528h1v1h-1zM701 529h1v1h-1zM702 530h1v1h-1zM703 531h1v1h-1zM704 532h1v1h-1zM705 533h2v1h-2zM707 534h1v1h-1zM708 535h1v1h-1zM709 536h1v1h-1zM710 537h2v1h-2zM712 538h1v1h-1zM713 539h1v1h-1zM714 540h2v1h-2zM716 541h1v1h-1zM717 542h1v1h-1zM718 543h1v1h-1zM719 544h2v1h-2zM721 545h1v1h-1zM722 546h2v1h-2zM724 547h1v1h-1zM725 548h1v1h-1zM726 549h2v1h-2zM728 550h1v1h-1zM729 551h1v1h-1zM730 552h2v1h-2zM732 553h1v1h-1zM733 554h2v1h-2zM735 555h1v1h-1zM736 556h1v1h-1zM737 557h2v1h-2zM739 558h1v1h-1zM740 559h2v1h-2zM742 560h2v1h-2zM744 561h2v1h-2zM746 562h1v1h-1zM747 563h2v1h-2zM749 564h2v1h-2zM751 565h1v1h-1zM752 566h2v1h-2zM754 567h2v1h-2zM756 568h1v1h-1zM757 569h2v1h-2zM759 570h2v1h-2zM761 571h3v1h-3zM764 572h2v1h-2zM766 573h2v1h-2zM768 574h2v1h-2zM770 575h3v1h-3zM773 576h2v1h-2zM775 577h2v1h-2zM777 578h2v1h-2zM779 579h3v1h-3zM782 580h2v1h-2zM784 581h2v1h-2zM786 582h2v1h-2zM788 583h3v1h-3zM791 584h2v1h-2zM793 585h3v1h-3zM796 586h3v1h-3zM799 587h3v1h-3zM802 588h3v1h-3zM805 589h3v1h-3zM808 590h3v1h-3zM811 591h3v1h-3zM814 592h3v1h-3zM817 593h3v1h-3zM820 594h4v1h-4zM824 595h3v1h-3zM827 596h4v1h-4zM831 597h4v1h-4zM835 598h4v1h-4zM839 599h4v1h-4zM843 600h4v1h-4zM847 601h4v1h-4zM851 602h4v1h-4zM855 603h4v1h-4zM859 604h5v1h-5zM864 605h5v1h-5zM869 606h5v1h-5zM874 607h6v1h-6zM880 608h7v1h-7zM887 609h7v1h-7zM894 610h8v1h-8zM902 611h8v1h-8zM910 612h10v1h-10zM920 613h10v1h-10zM930 614h12v1h-12zM942 615h13v1h-13zM955 616h14v1h-14zM969 617h20v1h-20zM989 618h26v1h-26zM1015 619h36v1h-36zM1051 620h54v1h-54zM1105 621h193v1h-193zM1298 622h81v1h-81z"/><path fill="#ff00ff" shape-rendering="crispEdges" d="M56 643h25v1h-25zM81 641h1v2h-1zM82 634h1v7h-1zM83 622h1v12h-1zM84 605h1v17h-1zM85 584h1v21h-1zM86 561h1v23h-1zM87 534h1v27h-1zM88 504h1v30h-1zM89 472h1v32h-1zM90 439h1v33h-1zM91 404h1v35h-1zM92 372h1v32h-1zM93 340h1v32h-1zM94 312h1v28h-1zM95 286h1v26h-1zM96 263h1v23h-1zM97 242h1v21h-1zM98 223h1v19h-1zM99 206h1v17h-1zM100 191h1v15h-1zM101 178h1v13h-1zM102 167h1v11h-1zM103 156h1v11h-1zM104 147h1v9h-1zM105 139h1v8h-1zM106 132h1v7h-1zM107 125h1v7h-1zM108 120h1v5h-1zM109 115h1v5h-1zM110 111h1v4h-1zM111 107h1v4h-1zM112 104h1v3h-1zM113 101h1v3h-1zM114 98h1v3h-1zM115 96h1v2h-1zM116 94h1v2h-1zM117 92h1v2h-1zM118 91h1v1h-1zM119 90h1v1h-1zM120 88h1v2h-1zM121 87h1v1h-1zM122 86h2v1h-2zM124 85h1v1h-1zM125 84h2v1h-2zM127 83h2v1h-2zM129 82h3v1h-3zM132 81h7v1h-7zM139 80h424v1h-424zM563 80h1v2h-1zM564 82h1v5h-1zM565 87h1v8h-1zM566 95h1v9h-1zM567 104h1v9h-1zM568 113h1v10h-1zM569 123h1v11h-1zM570 134h1v10h-1zM571 144h1v9h-1zM572 153h1v10h-1zM573 163h1v9h-1zM574 172h1v11h-1zM575 183h1v10h-1zM576 193h1v9h-1zM577 202h1v9h-1zM578 211h1v9h-1zM579 220h1v9h-1zM580 229h1v9h-1zM581 238h1v10h-1zM582 248h1v10h-1zM583 258h1v11h-1zM584 269h1v11h-1zM585 280h1v12h-1zM586 292h1v10h-1zM587 302h1v9h-1zM588 311h1v8h-1zM589 319h1v8h-1zM590 327h1v7h-1zM591 334h1v8h-1zM592 342h1v7h-1zM593 349h1v8h-1zM594 357h1v8h-1zM595 365h1v7h-1zM596 372h1v7h-1zM597 379h1v6h-1zM598 385h1v6h-1zM599 391h1v6h-1zM600 397h1v6h-1zM601 403h1v6h-1zM602 409h1v5h-1zM603 414h1v5h-1zM604 419h1v6h-1zM605 425h1v5h-1zM606 430h1v5h-1zM607 435h1v5h-1zM608 440h1v5h-1zM609 445h1v6h-1zM610 451h1v5h-1zM611 456h1v4h-1zM612 460h1v5h-1zM613 465h1v4h-1zM614 469h1v5h-1zM615 474h1v3h-1zM616 477h1v4h-1zM617 481h1v3h-1zM618 484h1v3h-1zM619 487h1v4h-1zM620 491h1v3h-1zM621 494h1v3h-1zM622 497h1v3h-1zM623 500h1v3h-1zM624 503h1v3h-1zM625 506h1v3h-1zM626 509h1v3h-1zM627 512h1v3h-1zM628 515h1v2h-1zM629 517h1v3h-1zM630 520h1v2h-1zM631 522h1v2h-1zM632 524h1v3h-1zM633 527h1v2h-1zM634 529h1v2h-1zM635 531h1v2h-1zM636 533h1v2h-1zM637 535h1v2h-1zM638 537h1v2h-1zM639 539h1v2h-1zM640 541h1v2h-1zM641 543h1v2h-1zM642 545h1v1h-1zM643 546h1v2h-1zM644 548h1v1h-1zM645 549h1v2h-1zM646 551h1v1h-1zM647 552h1v2h-1zM648 554h1v1h-1zM649 555h1v1h-1zM650 556h1v1h-1zM651 557h1v2h-1zM652 559h1v1h-1zM653 560h1v1h-1zM654 561h1v1h-1zM655 562h1v1h-1zM656 563h1v1h-1zM657 564h1v1h-1zM658 565h1v1h-1zM659 566h1v1h-1zM660 567h1v1h-1zM661 568h1v1h-1zM662 569h1v1h-1zM663 570h1v1h-1zM664 571h1v1h-1zM665 572h1v1h-1zM666 573h1v1h-1zM667 574h1v1h-1zM668 575h1v1h-1zM669 576h1v1h-1zM670 577h1v1h-1zM671 578h1v1h-1zM672 579h2v1h-2zM674 580h1v1h-1zM675 581h2v1h-2zM677 582h1v1h-1zM678 583h2v1h-2zM680 584h1v1h-1zM681 585h2v1h-2zM683 586h2v1h-2zM685 587h2v1h-2zM687 588h1v1h-1zM688 589h2v1h-2zM690 590h2v1h-2zM692 591h2v1h-2zM694 592h1v1h-1zM695 593h3v1h-3zM698 594h1v1h-1zM699 595h2v1h-2zM701 596h3v1h-3zM704 597h2v1h-2zM706 598h3v1h-3zM709 599h2v1h-2zM711 600h3v1h-3zM714 601h3v1h-3zM717 602h3v1h-3zM720 603h4v1h-4zM724 604h3v1h-3zM727 605h5v1h-5zM732 606h3v1h-3zM735 607h4v1h-4zM739 608h4v1h-4zM743 609h5v1h-5zM748 610h5v1h-5zM753 611h5v1h-5zM758 612h8v1h-8zM766 613h5v1h-5zM771 614h9v1h-9zM780 615h8v1h-8zM788 616h13v1h-13zM801 617h12v1h-12zM813 618h17v1h-17zM830 619h18v1h-18zM848 620h20v1h-20zM868 621h135v1h-135zM1003 622h376v1h-376z"/><path fill="#00ff00" shape-rendering="crispEdges" d="M692 66h1v2h-1zM693 68h1v4h-1zM694 71h1v4h-1zM695 75h1v1h-1zM696 71h1v4h-1zM697 68h1v3h-1zM698 66h1v2h-1zM704 65h1v2h-1zM703 67h1v8h-1zM704 75h1v2h-1zM710 69h1v1h-1zM714 69h1v7h-1zM709 72h1v3h-1zM713 74h1v1h-1zM723 65h1v11h-1zM719 69h1v1h-1zM722 69h1v1h-1zM718 70h1v4h-1zM719 74h1v1h-1zM722 74h1v1h-1zM727 69h1v1h-1zM731 69h1v1h-1zM726 70h1v4h-1zM727 74h1v1h-1zM731 74h1v1h-1zM737 65h1v2h-1zM738 67h1v8h-1zM737 75h1v2h-1zM711 68h3v1h-3zM710 71h4v1h-4zM710 75h3v1h-3zM719 68h3v1h-3zM719 75h3v1h-3zM728 68h3v1h-3zM728 75h3v1h-3z"/><g fill="none" stroke="#bdbdbd" stroke-width="1" stroke-linecap="square" stroke-linejoin="miter"><path transform="translate(13.5 76.5)" d="M6 0H0V4L1 3H4L6 4.5V7L4.5 9H1L0 8"/><rect x="23" y="84" width="2" height="2" stroke="none" fill="#bdbdbd"/><path transform="translate(30.5 76.5)" d="M1 0H4L5 1V8L4 9H1L0 8V1Z M1 6L4 3"/><path transform="translate(38.5 76.5)" d="M0 0L3 9L6 0"/><path transform="translate(13.5 131.5)" d="M5 9V0H4L0 5.5V6H6.3"/><rect x="23" y="139" width="2" height="2" stroke="none" fill="#bdbdbd"/><path transform="translate(30.5 131.5)" d="M6 0H0V4L1 3H4L6 4.5V7L4.5 9H1L0 8"/><path transform="translate(38.5 131.5)" d="M0 0L3 9L6 0"/><path transform="translate(13.5 185.5)" d="M5 9V0H4L0 5.5V6H6.3"/><rect x="23" y="193" width="2" height="2" stroke="none" fill="#bdbdbd"/><path transform="translate(30.5 185.5)" d="M1 0H4L5 1V8L4 9H1L0 8V1Z M1 6L4 3"/><path transform="translate(38.5 185.5)" d="M0 0L3 9L6 0"/><path transform="translate(13.5 240.5)" d="M0 1L1 0H5L6 1V3L5 4H2 M5 4L6 5V8L5 9H1L0 8"/><rect x="23" y="248" width="2" height="2" stroke="none" fill="#bdbdbd"/><path transform="translate(30.5 240.5)" d="M6 0H0V4L1 3H4L6 4.5V7L4.5 9H1L0 8"/><path transform="translate(38.5 240.5)" d="M0 0L3 9L6 0"/><path transform="translate(13.5 294.5)" d="M0 1L1 0H5L6 1V3L5 4H2 M5 4L6 5V8L5 9H1L0 8"/><rect x="23" y="302" width="2" height="2" stroke="none" fill="#bdbdbd"/><path transform="translate(30.5 294.5)" d="M1 0H4L5 1V8L4 9H1L0 8V1Z M1 6L4 3"/><path transform="translate(38.5 294.5)" d="M0 0L3 9L6 0"/><path transform="translate(13.5 348.5)" d="M0 1L1 0H5L6 1V3L0 9H6"/><rect x="23" y="356" width="2" height="2" stroke="none" fill="#bdbdbd"/><path transform="translate(30.5 348.5)" d="M6 0H0V4L1 3H4L6 4.5V7L4.5 9H1L0 8"/><path transform="translate(38.5 348.5)" d="M0 0L3 9L6 0"/><path transform="translate(13.5 403.5)" d="M0 1L1 0H5L6 1V3L0 9H6"/><rect x="23" y="411" width="2" height="2" stroke="none" fill="#bdbdbd"/><path transform="translate(30.5 403.5)" d="M1 0H4L5 1V8L4 9H1L0 8V1Z M1 6L4 3"/><path transform="translate(38.5 403.5)" d="M0 0L3 9L6 0"/><path transform="translate(12.5 457.5)" d="M0 1H3 M3 0V9 M1 9H5"/><rect x="23" y="465" width="2" height="2" stroke="none" fill="#bdbdbd"/><path transform="translate(30.5 457.5)" d="M6 0H0V4L1 3H4L6 4.5V7L4.5 9H1L0 8"/><path transform="translate(38.5 457.5)" d="M0 0L3 9L6 0"/><path transform="translate(12.5 511.5)" d="M0 1H3 M3 0V9 M1 9H5"/><rect x="23" y="519" width="2" height="2" stroke="none" fill="#bdbdbd"/><path transform="translate(30.5 511.5)" d="M1 0H4L5 1V8L4 9H1L0 8V1Z M1 6L4 3"/><path transform="translate(38.5 511.5)" d="M0 0L3 9L6 0"/><path transform="translate(13.5 566.5)" d="M1 0H4L5 1V8L4 9H1L0 8V1Z M1 6L4 3"/><rect x="23" y="574" width="2" height="2" stroke="none" fill="#bdbdbd"/><path transform="translate(30.5 566.5)" d="M6 0H0V4L1 3H4L6 4.5V7L4.5 9H1L0 8"/><path transform="translate(38.5 566.5)" d="M0 0L3 9L6 0"/><path transform="translate(13.5 620.5)" d="M1 0H4L5 1V8L4 9H1L0 8V1Z M1 6L4 3"/><rect x="23" y="628" width="2" height="2" stroke="none" fill="#bdbdbd"/><path transform="translate(30.5 620.5)" d="M1 0H4L5 1V8L4 9H1L0 8V1Z M1 6L4 3"/><path transform="translate(38.5 620.5)" d="M0 0L3 9L6 0"/><path transform="translate(5.5 674.5)" d="M0 5H6"/><path transform="translate(13.5 674.5)" d="M1 0H4L5 1V8L4 9H1L0 8V1Z M1 6L4 3"/><rect x="23" y="682" width="2" height="2" stroke="none" fill="#bdbdbd"/><path transform="translate(30.5 674.5)" d="M6 0H0V4L1 3H4L6 4.5V7L4.5 9H1L0 8"/><path transform="translate(38.5 674.5)" d="M0 0L3 9L6 0"/><path transform="translate(44.5 694.5)" d="M1 0H4L5 1V8L4 9H1L0 8V1Z M1 6L4 3"/><path transform="translate(52.5 694.5)" d="M0 2V12 M0 8L1 9H4L5 8 M5 2V9H6.3"/><path transform="translate(61.5 694.5)" d="M5 3L4 2H1L0 3V4L1 5H4L5 6V8L4 9H1L0 8"/><path transform="translate(176.5 694.5)" d="M0 1H3 M3 0V9 M1 9H5"/><path transform="translate(185.5 694.5)" d="M0 2V12 M0 8L1 9H4L5 8 M5 2V9H6.3"/><path transform="translate(193.5 694.5)" d="M5 3L4 2H1L0 3V4L1 5H4L5 6V8L4 9H1L0 8"/><path transform="translate(309.5 694.5)" d="M0 1L1 0H5L6 1V3L0 9H6"/><path transform="translate(317.5 694.5)" d="M0 2V12 M0 8L1 9H4L5 8 M5 2V9H6.3"/><path transform="translate(326.5 694.5)" d="M5 3L4 2H1L0 3V4L1 5H4L5 6V8L4 9H1L0 8"/><path transform="translate(441.5 694.5)" d="M0 1L1 0H5L6 1V3L5 4H2 M5 4L6 5V8L5 9H1L0 8"/><path transform="translate(449.5 694.5)" d="M0 2V12 M0 8L1 9H4L5 8 M5 2V9H6.3"/><path transform="translate(458.5 694.5)" d="M5 3L4 2H1L0 3V4L1 5H4L5 6V8L4 9H1L0 8"/><path transform="translate(573.5 694.5)" d="M5 9V0H4L0 5.5V6H6.3"/><path transform="translate(582.5 694.5)" d="M0 2V12 M0 8L1 9H4L5 8 M5 2V9H6.3"/><path transform="translate(590.5 694.5)" d="M5 3L4 2H1L0 3V4L1 5H4L5 6V8L4 9H1L0 8"/><path transform="translate(705.5 694.5)" d="M6 0H0V4L1 3H4L6 4.5V7L4.5 9H1L0 8"/><path transform="translate(714.5 694.5)" d="M0 2V12 M0 8L1 9H4L5 8 M5 2V9H6.3"/><path transform="translate(722.5 694.5)" d="M5 3L4 2H1L0 3V4L1 5H4L5 6V8L4 9H1L0 8"/><path transform="translate(838.5 694.5)" d="M6 1L5 0H2L0 2V7.5L1.5 9H4.5L6 7.5V5.5L4.5 4H1.5L0 5"/><path transform="translate(846.5 694.5)" d="M0 2V12 M0 8L1 9H4L5 8 M5 2V9H6.3"/><path transform="translate(854.5 694.5)" d="M5 3L4 2H1L0 3V4L1 5H4L5 6V8L4 9H1L0 8"/><path transform="translate(970.5 694.5)" d="M0 0H6L1 9"/><path transform="translate(978.5 694.5)" d="M0 2V12 M0 8L1 9H4L5 8 M5 2V9H6.3"/><path transform="translate(987.5 694.5)" d="M5 3L4 2H1L0 3V4L1 5H4L5 6V8L4 9H1L0 8"/><path transform="translate(1102.5 694.5)" d="M1 0H5L6 1V3L5 4H1L0 3V1Z M1 4L0 5V8L1 9H5L6 8V5L5 4"/><path transform="translate(1110.5 694.5)" d="M0 2V12 M0 8L1 9H4L5 8 M5 2V9H6.3"/><path transform="translate(1119.5 694.5)" d="M5 3L4 2H1L0 3V4L1 5H4L5 6V8L4 9H1L0 8"/><path transform="translate(1234.5 694.5)" d="M6 3.5L4.5 5H1.5L0 3.5V1.5L1.5 0H4.5L6 1.5V6L4 9H1L0 8"/><path transform="translate(1243.5 694.5)" d="M0 2V12 M0 8L1 9H4L5 8 M5 2V9H6.3"/><path transform="translate(1251.5 694.5)" d="M5 3L4 2H1L0 3V4L1 5H4L5 6V8L4 9H1L0 8"/></g></svg>
</body></html>
